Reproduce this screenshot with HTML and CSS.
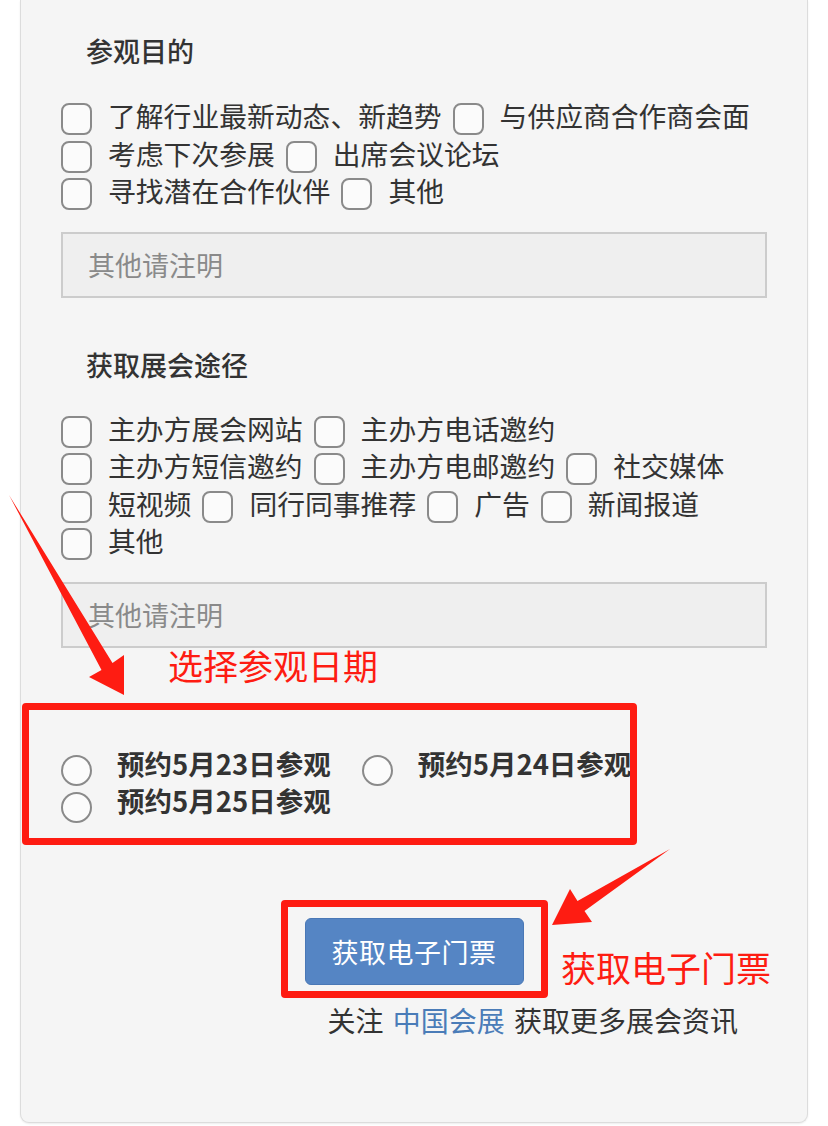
FILE: index.html
```html
<!DOCTYPE html>
<html lang="zh-CN">
<head>
<meta charset="utf-8">
<title>参观登记</title>
<link rel="stylesheet" href="styles.css">
</head>
<body>
<div class="page">
  <div class="card">
    <section class="group group-purpose">
      <h3 class="group-title">参观目的</h3>
      <div class="options">
        <label class="opt"><input type="checkbox" class="box"><span>了解行业最新动态、新趋势</span></label>
        <label class="opt"><input type="checkbox" class="box"><span>与供应商合作商会面</span></label>
        <label class="opt"><input type="checkbox" class="box"><span>考虑下次参展</span></label>
        <label class="opt"><input type="checkbox" class="box"><span>出席会议论坛</span></label>
        <label class="opt"><input type="checkbox" class="box"><span>寻找潜在合作伙伴</span></label>
        <label class="opt"><input type="checkbox" class="box"><span>其他</span></label>
      </div>
      <input class="note" type="text" placeholder="其他请注明">
    </section>

    <section class="group group-source">
      <h3 class="group-title">获取展会途径</h3>
      <div class="options">
        <label class="opt"><input type="checkbox" class="box"><span>主办方展会网站</span></label>
        <label class="opt"><input type="checkbox" class="box"><span>主办方电话邀约</span></label>
        <label class="opt"><input type="checkbox" class="box"><span>主办方短信邀约</span></label>
        <label class="opt"><input type="checkbox" class="box"><span>主办方电邮邀约</span></label>
        <label class="opt"><input type="checkbox" class="box"><span>社交媒体</span></label>
        <label class="opt"><input type="checkbox" class="box"><span>短视频</span></label>
        <label class="opt"><input type="checkbox" class="box"><span>同行同事推荐</span></label>
        <label class="opt"><input type="checkbox" class="box"><span>广告</span></label>
        <label class="opt"><input type="checkbox" class="box"><span>新闻报道</span></label>
        <label class="opt"><input type="checkbox" class="box"><span>其他</span></label>
      </div>
      <input class="note" type="text" placeholder="其他请注明">
    </section>

    <div class="dates">
      <label class="date"><input type="radio" name="day" class="dot"><span>预约5月23日参观</span></label>
      <label class="date"><input type="radio" name="day" class="dot"><span>预约5月24日参观</span></label>
      <label class="date"><input type="radio" name="day" class="dot"><span>预约5月25日参观</span></label>
    </div>

    <div class="actions">
      <button class="submit" type="button">获取电子门票</button>
    </div>

    <p class="follow">关注 <a class="brand" href="#">中国会展</a> 获取更多展会资讯</p>
  </div>

  <div class="annot">
    <svg class="arrows" width="828" height="1126" viewBox="0 0 828 1126">
      <polygon points="9,495 112.5,663 124,655 124,695 89,677 101.5,670" fill="#fe1c12"/>
      <polygon points="670,849 584.5,911 592,922 552,925 570,889 577.5,901" fill="#fe1c12"/>
    </svg>
    <div class="mark mark-dates"></div>
    <div class="mark mark-button"></div>
    <div class="note-text note-dates">选择参观日期</div>
    <div class="note-text note-button">获取电子门票</div>
  </div>
</div>
</body>
</html>
```

FILE: styles.css
```css
* {
  box-sizing: border-box;
}

html, body {
  margin: 0;
  padding: 0;
  background: #ffffff;
}

body {
  font-family: "Noto Sans CJK SC", "Noto Sans", sans-serif;
  color: #333333;
}

.page {
  position: relative;
  width: 828px;
  height: 1126px;
  overflow: hidden;
}

.card {
  margin: 0 20px;
  width: 788px;
  background: #f5f5f5;
  border: 1px solid #dcdcdc;
  border-top: none;
  border-radius: 0 0 9px 9px;
  box-shadow: 0 1px 2px rgba(0, 0, 0, 0.08);
  padding: 33px 40px 84px 40px;
}

.group-title {
  margin: 0;
  padding-left: 25px;
  font-size: 27px;
  line-height: 36px;
  font-weight: 500;
  color: #333;
}

.options {
  display: flex;
  flex-wrap: wrap;
  margin-top: 28px;
}

.group-source {
  margin-top: 49px;
}

.group-source .options {
  margin-top: 27px;
}

.opt {
  display: flex;
  align-items: center;
  height: 37.5px;
  margin-right: 11px;
  font-size: 27.8px;
  line-height: 37.5px;
  color: #333;
  white-space: nowrap;
}

.box {
  appearance: none;
  -webkit-appearance: none;
  width: 31px;
  height: 32px;
  margin: 7px 16px 0 0;
  border: 2.5px solid #8a8a8a;
  border-radius: 8px;
  background: #fbfbfb;
  flex: none;
}

.note {
  display: block;
  width: 706px;
  height: 66px;
  margin-top: 22px;
  padding: 0 25px;
  border: 2px solid #cccccc;
  background: #efefef;
  font-family: inherit;
  font-size: 27px;
  color: #333;
  outline: none;
}

.note::placeholder {
  color: #8a8a8a;
}

.dates {
  display: flex;
  flex-wrap: wrap;
  margin-top: 97px;
  width: 706px;
}

.date {
  display: flex;
  align-items: center;
  height: 37px;
  margin-right: 31px;
  font-size: 27.5px;
  font-weight: 700;
  color: #333;
  white-space: nowrap;
}

.dot {
  appearance: none;
  -webkit-appearance: none;
  width: 31px;
  height: 31px;
  margin: 14px 25px 0 0;
  border: 2.5px solid #8a8a8a;
  border-radius: 50%;
  background: #fbfbfb;
  flex: none;
}

.actions {
  display: flex;
  justify-content: center;
  margin-top: 99px;
}

.submit {
  width: 219px;
  height: 67px;
  border: 1px solid #4a78b6;
  border-radius: 6px;
  background: #5585c4;
  color: #ffffff;
  font-family: inherit;
  font-size: 27px;
  letter-spacing: 0.5px;
  padding: 0;
}

.follow {
  margin: 17px 0 0 0;
  padding-right: 29px;
  text-align: right;
  font-size: 28px;
  line-height: 36px;
  word-spacing: 3px;
  color: #333;
}

.brand {
  color: #4a7cb8;
  text-decoration: none;
}

/* annotation layer drawn over the page */
.annot {
  position: absolute;
  left: 0;
  top: 0;
  width: 828px;
  height: 1126px;
  pointer-events: none;
}

.arrows {
  position: absolute;
  left: 0;
  top: 0;
}

.mark {
  position: absolute;
  border: 7px solid #fe1c12;
  border-radius: 4px;
}

.mark-dates {
  left: 22px;
  top: 703px;
  width: 615px;
  height: 142px;
}

.mark-button {
  left: 281px;
  top: 900px;
  width: 267px;
  height: 98px;
}

.note-text {
  position: absolute;
  font-size: 35px;
  line-height: 40px;
  color: #fe1c12;
  white-space: nowrap;
}

.note-dates {
  left: 168px;
  top: 645px;
}

.note-button {
  left: 561px;
  top: 947px;
}
```
